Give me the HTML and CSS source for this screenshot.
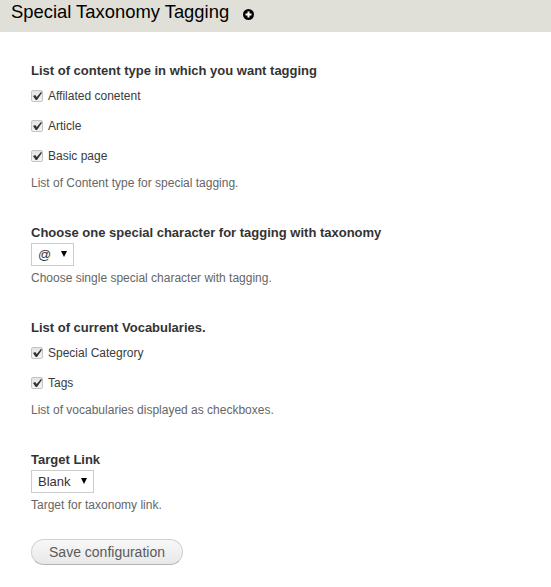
FILE: index.html
```html
<!DOCTYPE html>
<html lang="en">
<head>
    <meta charset="UTF-8">
    <title>Special Taxonomy Tagging</title>
    <link rel="stylesheet" href="styles.css">
</head>
<body>
    <div class="page-header">
        <h1>Special Taxonomy Tagging</h1>
        <a href="#" class="add-icon">
            <svg width="11" height="11" viewBox="0 0 11 11">
                <circle cx="5.5" cy="5.5" r="5.5" fill="#000"/>
                <rect x="2.5" y="4.5" width="6" height="2" fill="#fff"/>
                <rect x="4.5" y="2.5" width="2" height="6" fill="#fff"/>
            </svg>
        </a>
    </div>

    <form class="content">
        <div class="form-item">
            <label class="form-label">List of content type in which you want tagging</label>
            <div class="checks">
                <label class="check"><input type="checkbox" checked> Affilated conetent</label>
                <label class="check"><input type="checkbox" checked> Article</label>
                <label class="check"><input type="checkbox" checked> Basic page</label>
            </div>
            <div class="description">List of Content type for special tagging.</div>
        </div>

        <div class="form-item">
            <label class="form-label">Choose one special character for tagging with taxonomy</label>
            <div class="select select-char">@</div>
            <div class="description">Choose single special character with tagging.</div>
        </div>

        <div class="form-item">
            <label class="form-label">List of current Vocabularies.</label>
            <div class="checks">
                <label class="check"><input type="checkbox" checked> Special Categrory</label>
                <label class="check"><input type="checkbox" checked> Tags</label>
            </div>
            <div class="description">List of vocabularies displayed as checkboxes.</div>
        </div>

        <div class="form-item">
            <label class="form-label">Target Link</label>
            <div class="select select-target">Blank</div>
            <div class="description">Target for taxonomy link.</div>
        </div>

        <button type="button" class="save">Save configuration</button>
    </form>
</body>
</html>
```

FILE: styles.css
```css
body {
    font-family: "Liberation Sans", Arial, sans-serif;
    font-size: 12px;
    margin: 0;
    background-color: #fff;
    color: #3b3b3b;
}

.page-header {
    display: flex;
    align-items: center;
    height: 32px;
    padding-left: 11px;
    background-color: #e0e0d8;
}

h1 {
    margin: 0 0 8px;
    font-size: 18.4px;
    font-weight: normal;
    line-height: 24px;
    color: #000;
}

.add-icon {
    display: flex;
    margin: 0 0 4px 14px;
}

.content {
    padding: 31px 31px 0;
}

.form-item {
    margin-bottom: 34px;
}

.form-label {
    display: block;
    font-size: 13px;
    font-weight: bold;
    line-height: 16px;
    color: #333;
}

.checks {
    margin: 2px 0 4px;
}

.check {
    display: flex;
    align-items: center;
    height: 30px;
    line-height: 16px;
}

.check input {
    appearance: none;
    position: relative;
    box-sizing: border-box;
    width: 12px;
    height: 12px;
    margin: 0 5px 0 0;
    border: 1px solid #c4c4c4;
    border-radius: 2px;
    background: linear-gradient(#e4e4e4, #f4f4f4);
}

.check input:checked::after {
    content: "";
    position: absolute;
    left: 1px;
    top: 1px;
    width: 9px;
    height: 8px;
    background-color: #333;
    clip-path: polygon(0 50%, 25% 38%, 42% 62%, 88% 0, 100% 8%, 45% 100%, 30% 100%);
}

.description {
    font-size: 12px;
    line-height: 16px;
    color: #666;
}

.select {
    position: relative;
    box-sizing: border-box;
    height: 23px;
    margin: 2px 0 4px;
    padding-left: 6px;
    border: 1px solid #ccc;
    font-size: 13px;
    line-height: 21px;
    color: #333;
}

.select::after {
    content: "";
    position: absolute;
    top: 7px;
    right: 6px;
    border-left: 3px solid transparent;
    border-right: 3px solid transparent;
    border-top: 6px solid #000;
}

.select-char {
    width: 43px;
}

.select-target {
    width: 63px;
}

.save {
    display: block;
    width: 152px;
    height: 26px;
    margin-top: -8px;
    padding: 0;
    border: 1px solid #d0d0d0;
    border-bottom-color: #b4b4b4;
    border-radius: 20px;
    background: linear-gradient(#f8f8f8, #e8e8e8);
    font-family: inherit;
    font-size: 14px;
    color: #5a5a5a;
}
```
